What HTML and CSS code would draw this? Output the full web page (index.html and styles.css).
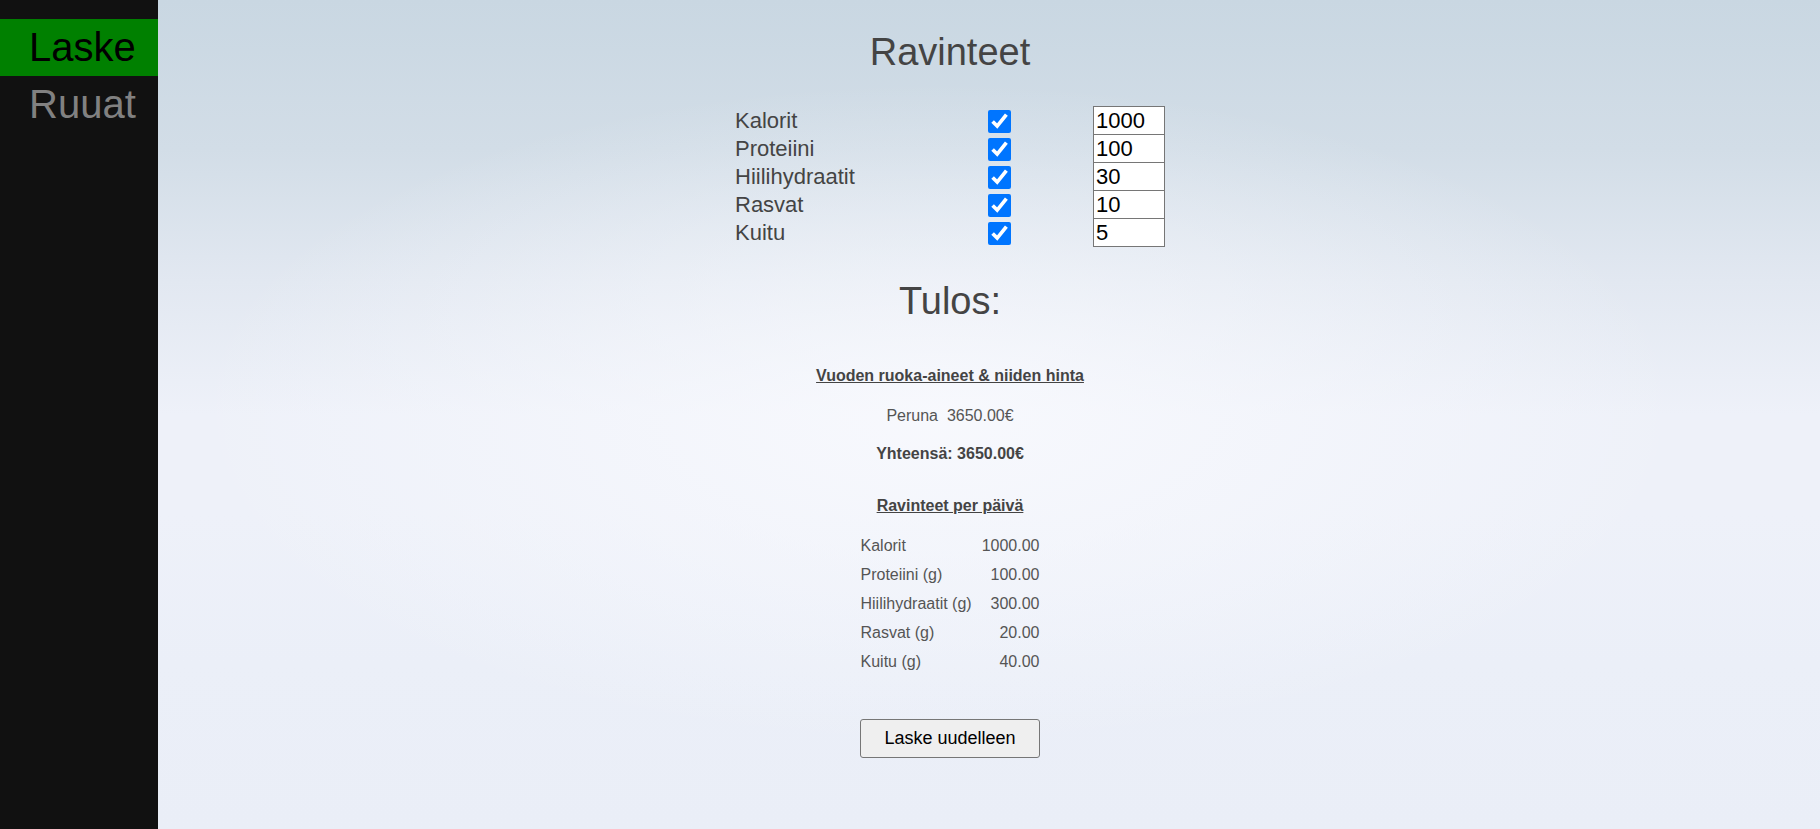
FILE: index.html
```html
<!DOCTYPE html>
<html lang="fi">
<head>
<meta charset="utf-8">
<title>Laske</title>
<link rel="stylesheet" href="styles.css">
</head>
<body>
<div class="page">
  <nav class="sidenav">
    <a class="nav-link active" href="#">Laske</a>
    <a class="nav-link" href="#">Ruuat</a>
  </nav>
  <main class="main">
    <h1 class="title">Ravinteet</h1>
    <div class="form">
      <div class="row"><span class="label">Kalorit</span><input class="check" type="checkbox" checked><input class="num" type="text" value="1000"></div>
      <div class="row"><span class="label">Proteiini</span><input class="check" type="checkbox" checked><input class="num" type="text" value="100"></div>
      <div class="row"><span class="label">Hiilihydraatit</span><input class="check" type="checkbox" checked><input class="num" type="text" value="30"></div>
      <div class="row"><span class="label">Rasvat</span><input class="check" type="checkbox" checked><input class="num" type="text" value="10"></div>
      <div class="row"><span class="label">Kuitu</span><input class="check" type="checkbox" checked><input class="num" type="text" value="5"></div>
    </div>
    <h2 class="result-title">Tulos:</h2>
    <h3 class="sub sub-first">Vuoden ruoka-aineet &amp; niiden hinta</h3>
    <p class="item">Peruna&nbsp; 3650.00€</p>
    <p class="total">Yhteensä: 3650.00€</p>
    <h3 class="sub sub-second">Ravinteet per päivä</h3>
    <table class="nutr">
      <tr><td class="n-name">Kalorit</td><td class="n-val">1000.00</td></tr>
      <tr><td class="n-name">Proteiini (g)</td><td class="n-val">100.00</td></tr>
      <tr><td class="n-name">Hiilihydraatit (g)</td><td class="n-val">300.00</td></tr>
      <tr><td class="n-name">Rasvat (g)</td><td class="n-val">20.00</td></tr>
      <tr><td class="n-name">Kuitu (g)</td><td class="n-val">40.00</td></tr>
    </table>
    <button class="btn" type="button">Laske uudelleen</button>
  </main>
</div>
</body>
</html>
```

FILE: styles.css
```css
html, body {
  margin: 0;
  padding: 0;
  height: 100%;
}

body {
  font-family: "Liberation Sans", Arial, sans-serif;
  color: #444;
}

.page {
  display: flex;
  min-height: 829px;
  height: 100%;
}

.sidenav {
  width: 158px;
  flex: 0 0 158px;
  background: #111111;
  padding-top: 19px;
  display: flex;
  flex-direction: column;
}

.nav-link {
  display: block;
  font-size: 40px;
  line-height: 45px;
  padding: 6px 0 6px 29px;
  color: #818181;
  text-decoration: none;
}

.nav-link.active {
  background: #008000;
  color: #000000;
}

.main {
  flex: 1;
  display: flex;
  flex-direction: column;
  align-items: center;
  text-align: center;
  padding-right: 78px;
  background:
    radial-gradient(ellipse 45% 40% at 47% 50%, rgba(249, 250, 254, 0.85), rgba(249, 250, 254, 0)),
    linear-gradient(to bottom, #c9d7e2 0%, #d2dde7 18%, #e2e8f1 34%, #eef1f9 50%, #eef1f9 62%, #ebeff8 80%, #eaeef7 100%);
}

.title {
  margin: 31px 0 0;
  font-size: 38px;
  line-height: 42px;
  font-weight: normal;
  color: #444;
}

.form {
  margin-top: 33px;
  width: 430px;
  display: flex;
  flex-direction: column;
}

.row {
  display: grid;
  grid-template-columns: 253px 105px 72px;
  height: 28px;
  align-items: start;
  text-align: left;
}

.label {
  font-size: 22px;
  line-height: 29px;
  color: #444;
}

.check {
  width: 23px;
  height: 23px;
  margin: 4px 0 0;
  accent-color: #0075ff;
}

.num {
  box-sizing: border-box;
  width: 72px;
  height: 29px;
  margin: 0;
  padding: 0 2px;
  border: 1px solid #767676;
  border-radius: 0;
  background: #ffffff;
  font-family: "Liberation Sans", Arial, sans-serif;
  font-size: 22px;
  color: #000;
}

.result-title {
  margin: 34px 0 0;
  font-size: 38px;
  line-height: 42px;
  font-weight: normal;
  color: #444;
}

.sub {
  margin: 0;
  font-size: 16px;
  line-height: 18px;
  font-weight: bold;
  text-decoration: underline;
  color: #444;
}

.sub-first {
  margin-top: 45px;
}

.sub-second {
  margin-top: 34px;
}

.item {
  margin: 22px 0 0;
  font-size: 16px;
  line-height: 18px;
  color: #555;
}

.total {
  margin: 20px 0 0;
  font-size: 16px;
  line-height: 18px;
  font-weight: bold;
  color: #444;
}

.nutr {
  margin-top: 16px;
  border-collapse: collapse;
  font-size: 16px;
  color: #555;
}

.nutr td {
  padding: 5px;
  line-height: 19px;
}

.n-name {
  text-align: left;
}

.n-val {
  text-align: right;
}

.btn {
  margin-top: 43px;
  width: 180px;
  height: 39px;
  box-sizing: border-box;
  padding: 0;
  font-family: "Liberation Sans", Arial, sans-serif;
  font-size: 18px;
  line-height: 21px;
  color: #000;
  background: #efefef;
  border: 1px solid #767676;
  border-radius: 3px;
}
```
